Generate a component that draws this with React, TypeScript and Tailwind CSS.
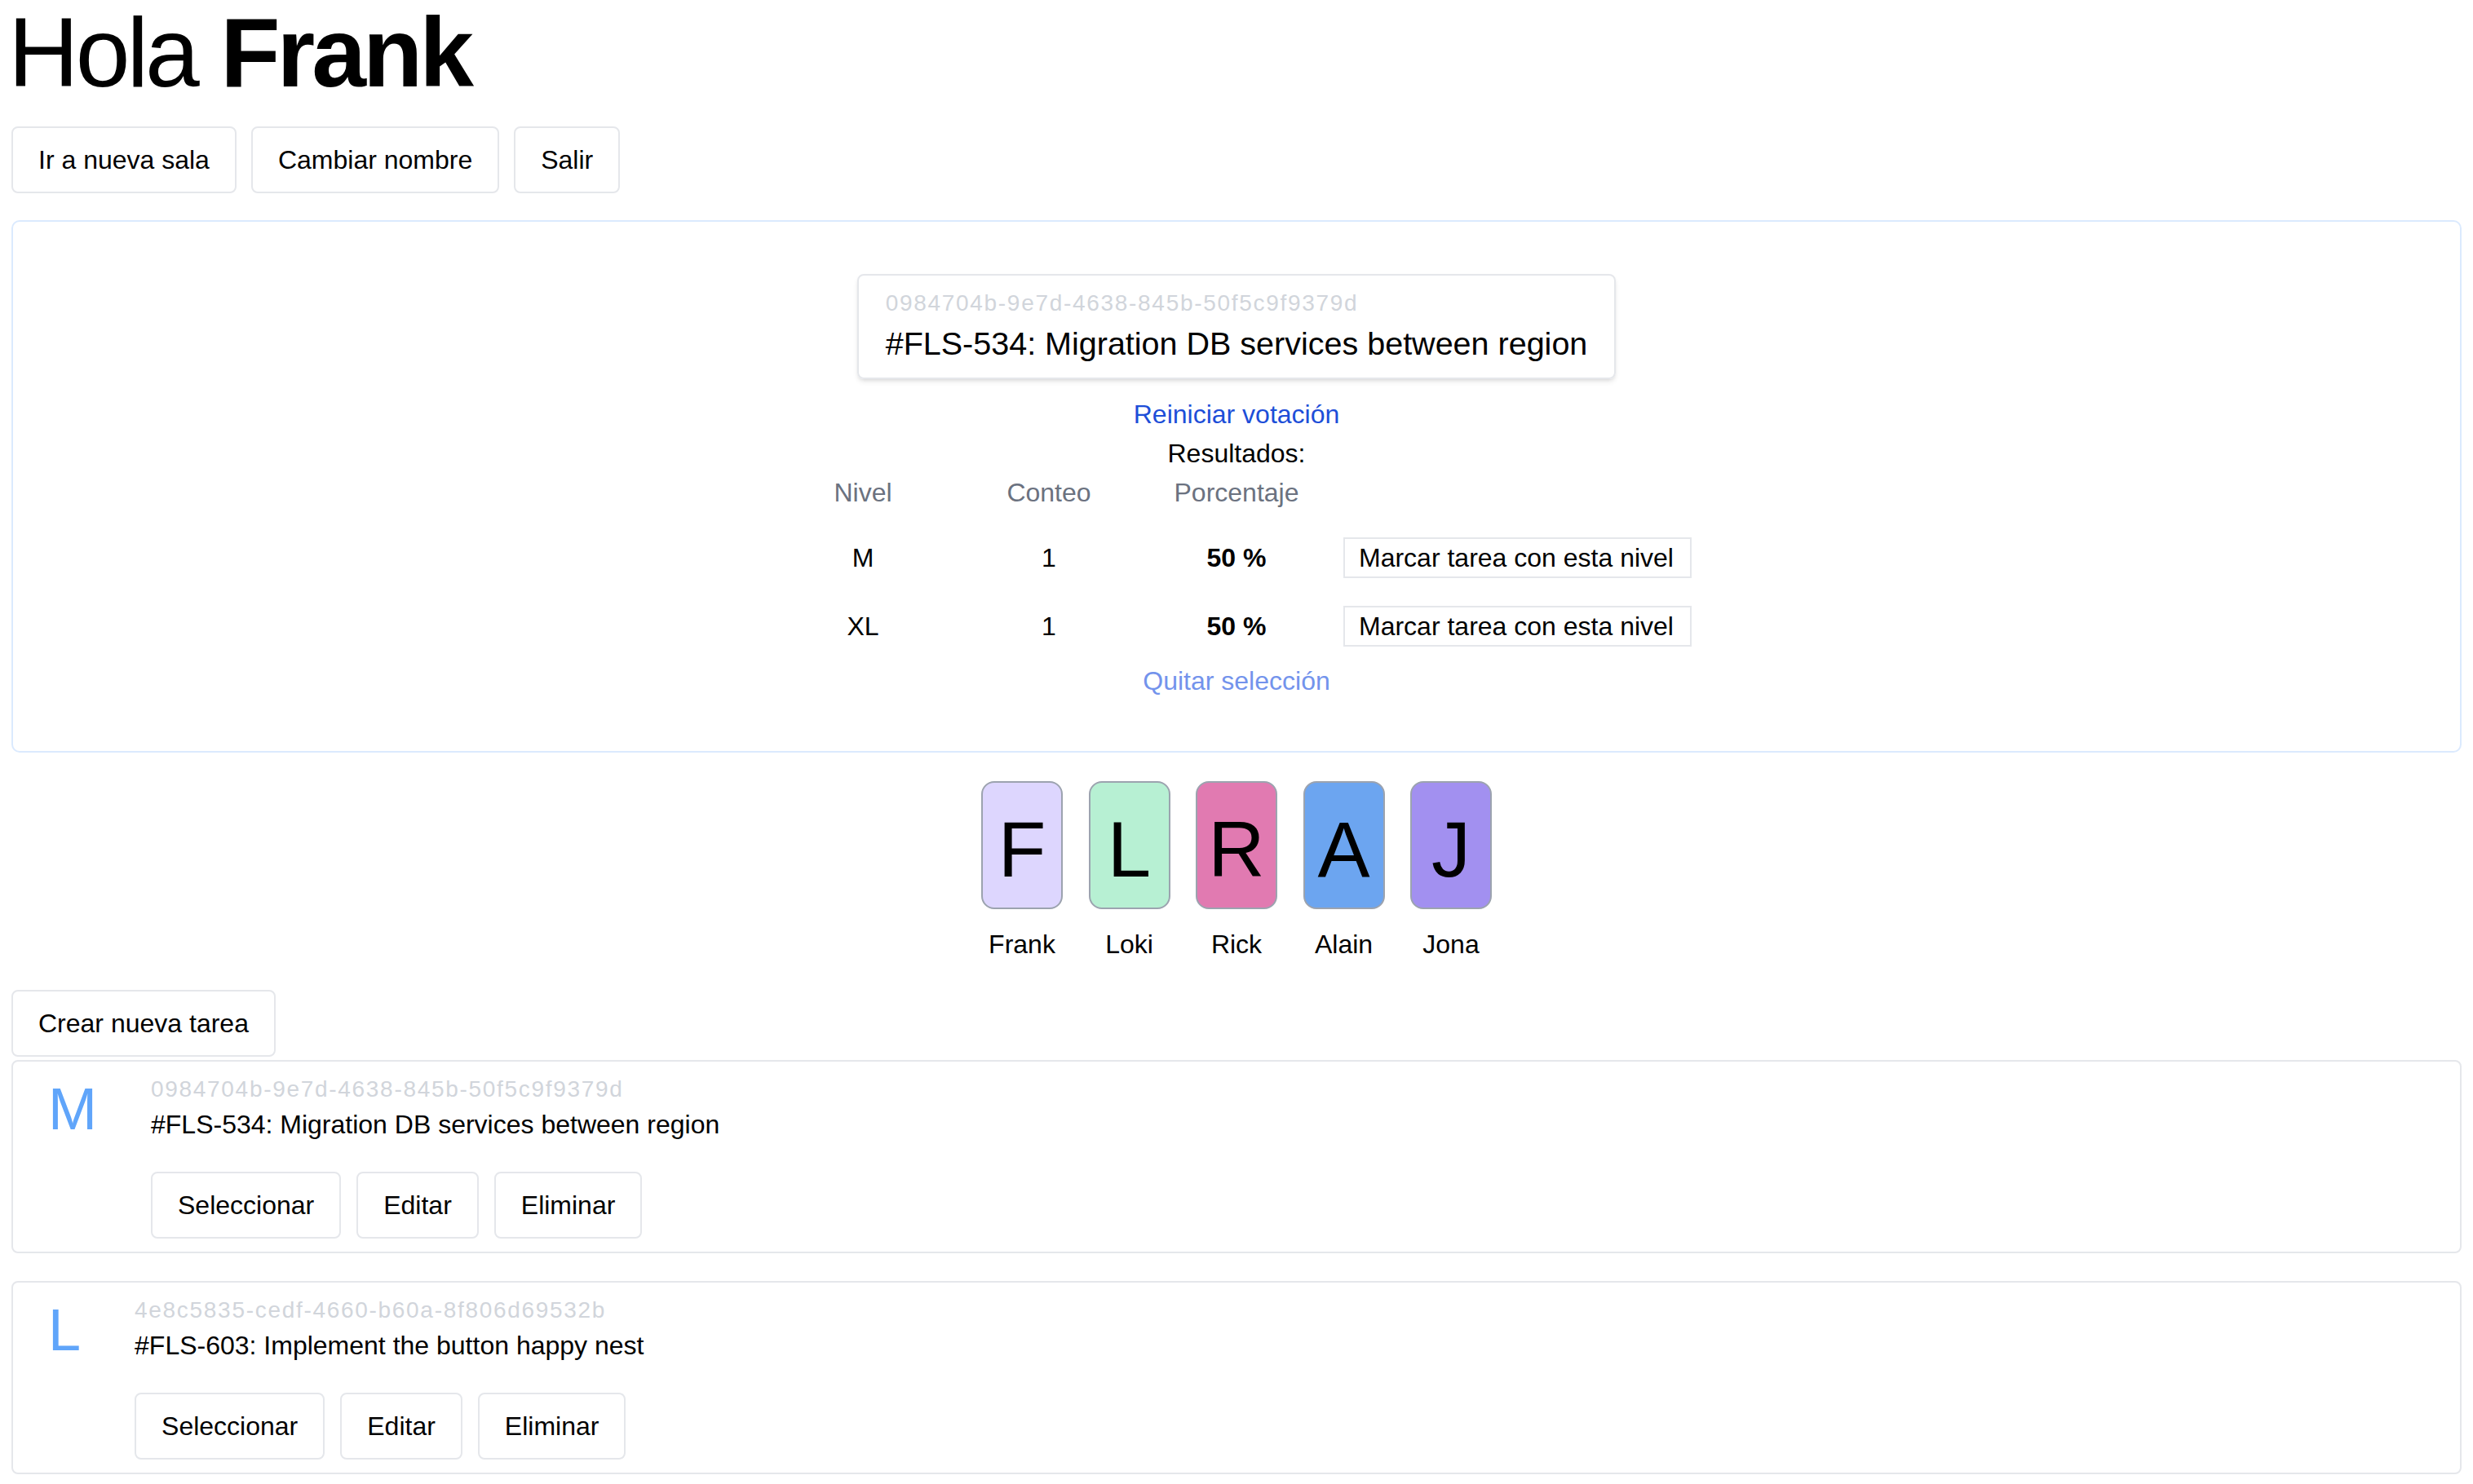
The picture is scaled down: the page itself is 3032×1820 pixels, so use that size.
import React from 'react';

const sessionTask = {
  id: '0984704b-9e7d-4638-845b-50f5c9f9379d',
  title: '#FLS-534: Migration DB services between region',
};

const results = [
  { level: 'M', count: 1, percent: 50 },
  { level: 'XL', count: 1, percent: 50 },
];

const players = [
  { name: 'Frank', color: 'bg-[#ddd6fe]' },
  { name: 'Loki', color: 'bg-[#b7f0d3]' },
  { name: 'Rick', color: 'bg-[#e17ab1]' },
  { name: 'Alain', color: 'bg-[#6ca5f0]' },
  { name: 'Jona', color: 'bg-[#a290f0]' },
];

const tasks = [
  { estimate: 'M', id: '0984704b-9e7d-4638-845b-50f5c9f9379d', title: '#FLS-534: Migration DB services between region' },
  { estimate: 'L', id: '4e8c5835-cedf-4660-b60a-8f806d69532b', title: '#FLS-603: Implement the button happy nest' },
];

const Button = ({ children }: { children: React.ReactNode }) => (
  <button className="h-[82px] px-[31px] border-2 border-[#e5e7eb] rounded-[8px] bg-white text-black">
    {children}
  </button>
);

const App = () => {
  return (
    <div className="min-h-screen bg-white px-[14px] pt-[4px] text-[32px] leading-[48px] text-black font-['Liberation_Sans',Arial,sans-serif]">
      {/* Greeting */}
      <h1 className="text-[120px] leading-[120px] tracking-[-4px] -ml-[4px]">
        Hola <span className="font-bold">Frank</span>
      </h1>

      <div className="mt-[31px] flex gap-[18px]">
        <Button>Ir a nueva sala</Button>
        <Button>Cambiar nombre</Button>
        <Button>Salir</Button>
      </div>

      {/* Voting panel */}
      <div className="mt-[33px] border-2 border-[#dbeafe] rounded-[10px] pt-[64px] pb-[62px] flex flex-col items-center">
        <div className="border-2 border-[#e5e7eb] rounded-[8px] shadow-md px-[33px] pt-[16px] pb-[16px] whitespace-nowrap">
          <div className="text-[28px] leading-[36px] tracking-[1.7px] text-[#d1d5db]">{sessionTask.id}</div>
          <div className="mt-[5px] text-[39.5px] leading-[52px]">{sessionTask.title}</div>
        </div>

        <a className="mt-[19px] text-[#1d4ed8] cursor-pointer">Reiniciar votación</a>
        <div>Resultados:</div>

        <div className="flex flex-col">
          <div className="flex h-[48px] items-center text-[#6b7280]">
            <div className="w-[248px] text-center">Nivel</div>
            <div className="w-[208px] text-center">Conteo</div>
            <div className="w-[252px] text-center">Porcentaje</div>
            <div className="w-[456px]" />
          </div>
          {results.map((r, i) => (
            <div key={r.level} className={`flex items-center ${i === 0 ? 'mt-[14px] h-[84px]' : 'h-[83px]'}`}>
              <div className="w-[248px] text-center">{r.level}</div>
              <div className="w-[208px] text-center">{r.count}</div>
              <div className="w-[252px] text-center font-bold">{r.percent} %</div>
              <div className="w-[456px] pl-[5px]">
                <button className="h-[50px] w-[427px] border-2 border-[#e5e7eb] bg-white text-left pl-[17px] leading-[46px]">
                  Marcar tarea con esta nivel
                </button>
              </div>
            </div>
          ))}
        </div>

        <a className="mt-[2px] text-[#7393ec] cursor-pointer">Quitar selección</a>
      </div>

      {/* Players */}
      <div className="mt-[35px] flex justify-center gap-[31.5px]">
        {players.map((p) => (
          <div key={p.name} className="w-[100px] flex flex-col items-center">
            <div className={`w-[100px] h-[157px] rounded-[16px] border-2 border-[#9ca3af] ${p.color} flex items-center justify-center text-[96px] leading-none pt-[10px]`}>
              {p.name[0]}
            </div>
            <div className="mt-[19px] whitespace-nowrap">{p.name}</div>
          </div>
        ))}
      </div>

      {/* Tasks */}
      <div className="mt-[32px]">
        <Button>Crear nueva tarea</Button>
      </div>

      <div className="mt-[4px] flex flex-col gap-[34px]">
        {tasks.map((t) => (
          <div key={t.id} className="border-2 border-[#e5e7eb] rounded-[8px] pl-[43px] pt-[16px] pb-[16px] flex gap-[66px]">
            <div className="mt-[6px] text-[72px] leading-[72px] text-[#60a5fa]">{t.estimate}</div>
            <div>
              <div className="text-[28px] leading-[36px] tracking-[1.7px] text-[#d1d5db]">{t.id}</div>
              <div className="mt-[1px]">{t.title}</div>
              <div className="mt-[34px] flex gap-[19px]">
                <Button>Seleccionar</Button>
                <Button>Editar</Button>
                <Button>Eliminar</Button>
              </div>
            </div>
          </div>
        ))}
      </div>
    </div>
  );
};

export default App;
